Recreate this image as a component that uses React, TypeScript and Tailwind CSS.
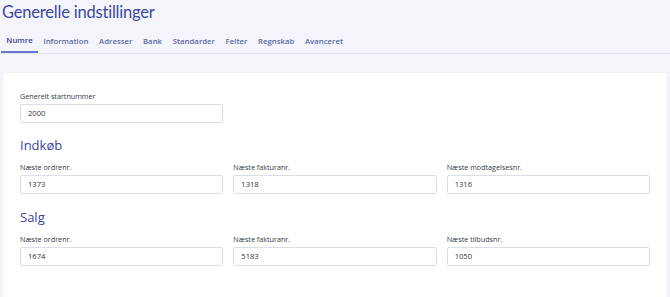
import React from "react";

const tabs = ["Numre", "Information", "Adresser", "Bank", "Standarder", "Felter", "Regnskab", "Avanceret"];

function Field({ label, value }: { label: string; value: string }) {
  return (
    <div className="flex flex-col">
      <label className="text-[7.2px] leading-[12px] text-[#333a45] mb-[2px]">{label}</label>
      <div className="h-[19px] border border-[#dcdee6] rounded-[2px] bg-white flex items-center pl-[7px] text-[7.6px] text-[#2f3540]">
        {value}
      </div>
    </div>
  );
}

export default function App() {
  return (
    <div className="w-[670px] h-[297px] overflow-hidden bg-[#f4f5fa]" style={{ fontFamily: '"Open Sans", "Noto Sans", sans-serif' }}>
      <h1
        className="text-[16.5px] leading-[24px] text-[#3d48a0] pl-[2px] tracking-[-0.2px] font-normal"
        style={{ fontFamily: 'Lato, "Open Sans", sans-serif' }}
      >
        Generelle indstillinger
      </h1>
      <div className="mt-[6px] flex border-b border-[#e2e4ec] h-[24px] items-stretch">
        {tabs.map((t, i) => (
          <div
            key={t}
            className={
              "flex items-center px-[5.3px] text-[7.8px] font-semibold " +
              (i === 0
                ? "text-[#3a4590] border-b-2 border-[#6b74c8] ml-[1px]"
                : "text-[#5f6aa8]")
            }
          >
            {t}
          </div>
        ))}
      </div>
      <div className="mt-[18px] ml-[2px] w-[666px] h-[240px] bg-white border border-[#eceef3] rounded-[2px] px-[17px] pt-[17px]">
        <div className="grid grid-cols-3 gap-x-[10px]">
          <Field label="Generelt startnummer" value="2000" />
        </div>
        <h2 className="mt-[12px] text-[13px] leading-[20px] text-[#3a45a0] font-medium">Indkøb</h2>
        <div className="mt-[6px] grid grid-cols-3 gap-x-[10px]">
          <Field label="Næste ordrenr." value="1373" />
          <Field label="Næste fakturanr." value="1318" />
          <Field label="Næste modtagelsesnr." value="1316" />
        </div>
        <h2 className="mt-[13px] text-[13px] leading-[20px] text-[#3a45a0] font-medium">Salg</h2>
        <div className="mt-[6px] grid grid-cols-3 gap-x-[10px]">
          <Field label="Næste ordrenr." value="1674" />
          <Field label="Næste fakturanr." value="5183" />
          <Field label="Næste tilbudsnr." value="1050" />
        </div>
      </div>
    </div>
  );
}
